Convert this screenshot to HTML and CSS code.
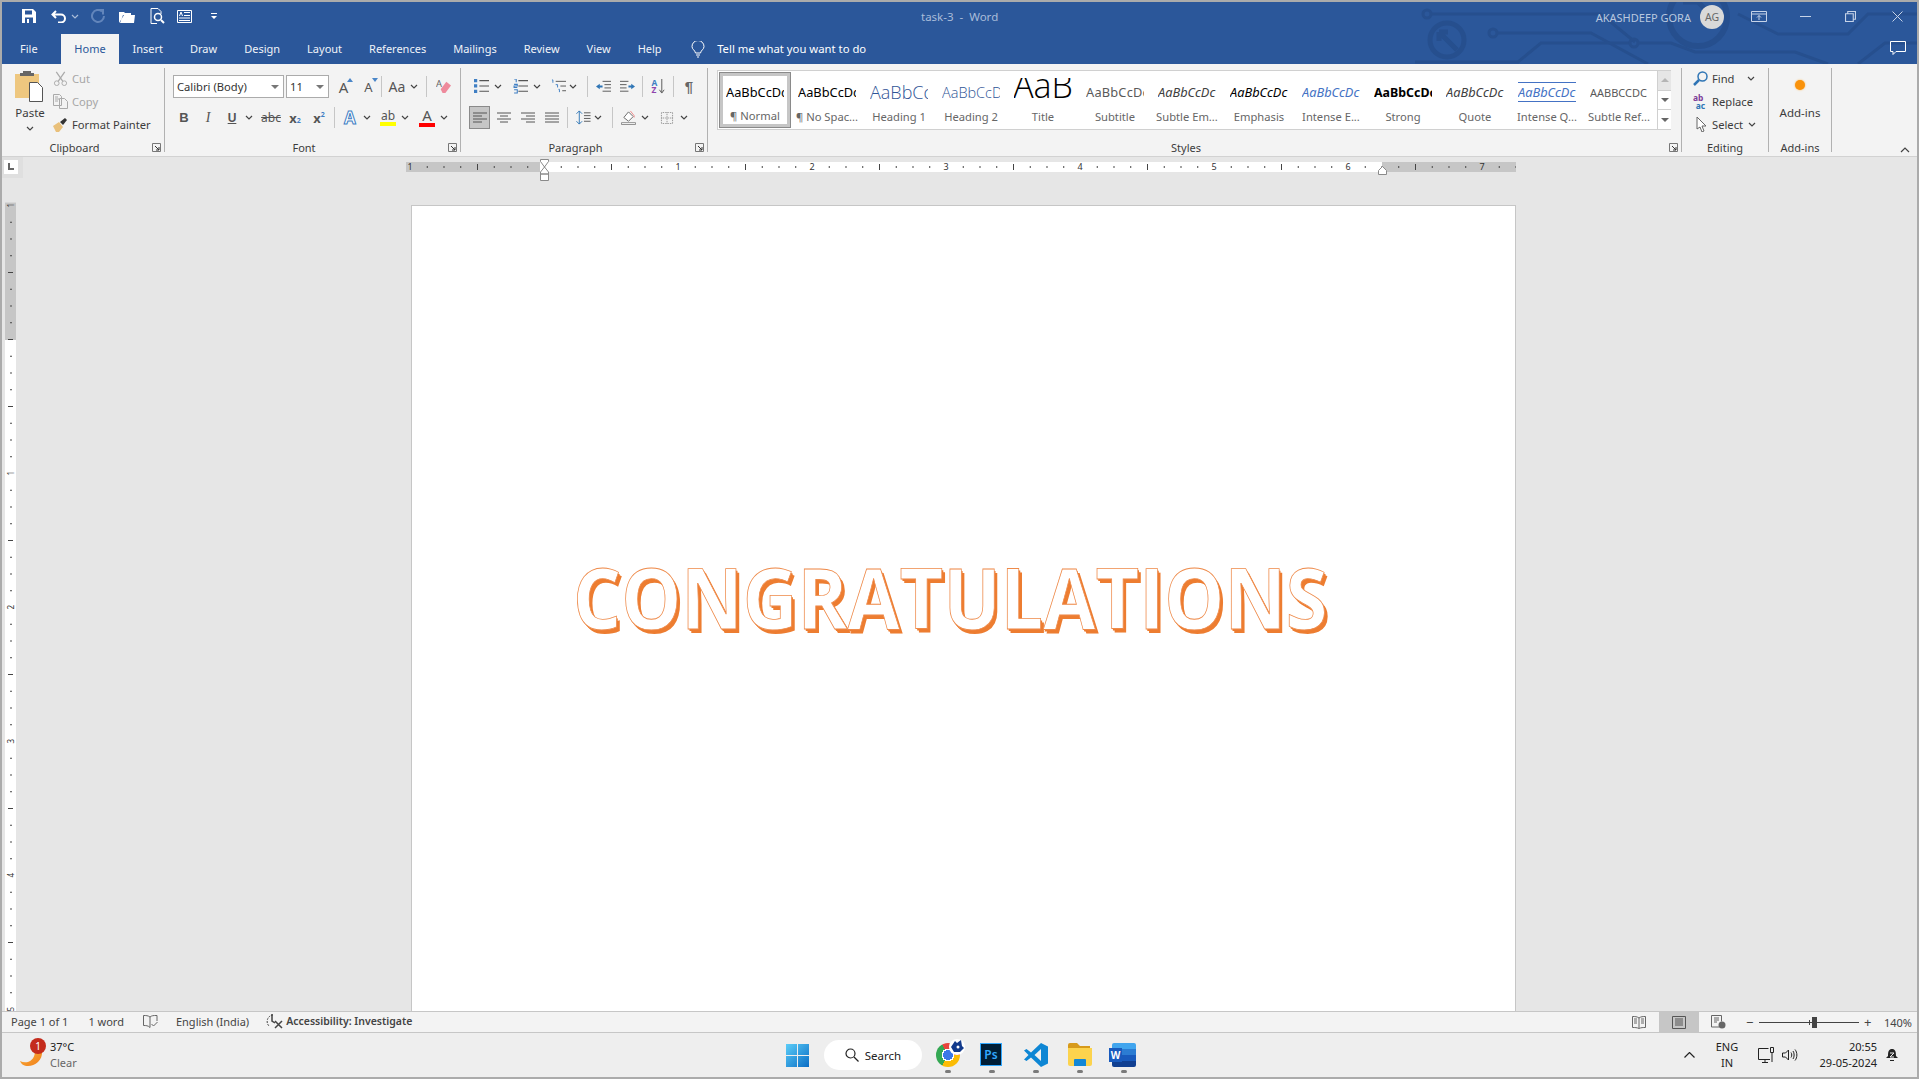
FILE: index.html
```html
<!DOCTYPE html>
<html lang="en">

<head>
    <meta charset="UTF-8">
    <title>task-3 - Word</title>
    <link rel="stylesheet" href="styles.css">
</head>

<body>
    <svg class="defs">
        <symbol id="chev" viewBox="0 0 8 5"><path d="M1 1l3 3 3-3" fill="none" stroke="#444" stroke-width="1.2"/></symbol>
        <symbol id="launch" viewBox="0 0 9 9"><path d="M.5 8.5v-8h8v8z" fill="none" stroke="#777"/><path d="M3 3l4 4M7 4v3H4" fill="none" stroke="#333"/></symbol>
        <symbol id="lines" viewBox="0 0 14 12"><path d="M0 1h14M0 4h14M0 7h14M0 10h14" stroke="#555" stroke-width="1" fill="none"/></symbol>
    </svg>

    <div class="window">
        <div class="head">
            <svg class="circuit" viewBox="0 0 519 62" width="519" height="62">
                <g fill="none" stroke="#264f8e" stroke-width="3">
                    <circle cx="29" cy="12" r="4"/><path d="M33 12h170l34 28"/>
                    <circle cx="95" cy="31" r="4"/><path d="M99 31h94l57 31"/>
                    <path d="M17 60h103l23-19h89"/><circle cx="236" cy="41" r="4"/><path d="M240 41h33l24 9h100l33 12"/>
                    <circle cx="49" cy="38" r="17" stroke-width="5"/><path d="M41 30h9M41 30v9M41 30l18 18" stroke-width="5"/>
                    <circle cx="300" cy="15" r="29" stroke-width="6"/><path d="M285 0h15M300 0l20 20" stroke-width="5"/>
                    <path d="M460 62l27-21h32M340 12l40 20h70l20-20h49"/>
                </g>
            </svg>
            <!-- title bar -->
            <header class="titlebar">
                <div class="qat">
                    <svg class="q-save" viewBox="0 0 14 14"><path d="M0 0h11l3 3v11H0z" fill="#fff"/><path d="M3 1.500h7v4H3zM3 8.500h8V14H3z" fill="#2b579a"/><path d="M5 10h2v4H5z" fill="#fff"/></svg>
                    <svg class="q-undo" viewBox="0 0 16 14"><path d="M5 2L1.500 5.500 5 9M2 5.500h8a4 4 0 0 1 0 8H7" fill="none" stroke="#fff" stroke-width="2"/></svg>
                    <svg class="q-chev" viewBox="0 0 8 5"><path d="M1 1l3 3 3-3" fill="none" stroke="#a9bcd9" stroke-width="1.200"/></svg>
                    <svg class="q-redo" viewBox="0 0 14 14"><path d="M11 2.500A6 6 0 1 0 13 7M7 .5h5v5" fill="none" stroke="#6285bb" stroke-width="2"/></svg>
                    <svg class="q-open" viewBox="0 0 16 13"><path d="M0 13V2h5l1 1h6v2H4L1 13h14l1-8H5" fill="#fff"/></svg>
                    <svg class="q-prev" viewBox="0 0 15 16"><path d="M1 .5h7l3 3V6M1 .5V15.500h6" fill="none" stroke="#fff"/><circle cx="8" cy="9" r="3.500" fill="none" stroke="#fff" stroke-width="1.500"/><path d="M11 12l3 3" stroke="#fff" stroke-width="2"/></svg>
                    <svg class="q-form" viewBox="0 0 15 13"><path d="M.5.5h14v12H.5z" fill="none" stroke="#fff"/><path d="M2.500 6l1.500-4 1.500 4M7 2.500h6M7 5.500h6M2 8h11M2 10.500h11" fill="none" stroke="#fff"/></svg>
                    <svg class="q-more" viewBox="0 0 7 7"><path d="M0 0h6v1H0zM0 3h6L3 6z" fill="#fff"/></svg>
                </div>
                <div class="doc-title">task-3&nbsp; -&nbsp; Word</div>
                <div class="account">
                    <span class="user">AKASHDEEP GORA</span>
                    <span class="avatar">AG</span>
                </div>
                <div class="winbtns">
                    <svg class="w-display" viewBox="0 0 16 11"><path d="M.5.5h15v10H.5zM.5 3h15M8 9V4.500M6 6.500l2-2 2 2" fill="none" stroke="#c6d3e8"/></svg>
                    <svg class="w-min" viewBox="0 0 11 1"><path d="M0 .5h11" stroke="#c6d3e8"/></svg>
                    <svg class="w-max" viewBox="0 0 10 10"><path d="M.5 2.500h7v7h-7zM2.500 2.500V.5h7v7h-2" fill="none" stroke="#c6d3e8"/></svg>
                    <svg class="w-close" viewBox="0 0 11 11"><path d="M.5.5l10 10M10.500.5l-10 10" stroke="#c6d3e8"/></svg>
                </div>
            </header>

            <!-- tabs -->
            <nav class="tabs">
                <span class="tab file">File</span>
                <span class="tab active">Home</span>
                <span class="tab">Insert</span>
                <span class="tab">Draw</span>
                <span class="tab">Design</span>
                <span class="tab">Layout</span>
                <span class="tab">References</span>
                <span class="tab">Mailings</span>
                <span class="tab">Review</span>
                <span class="tab">View</span>
                <span class="tab">Help</span>
                <svg class="bulb" viewBox="0 0 14 17"><path d="M4.500 12C4 9 1 8.500 1 5.500a6 6 0 0 1 12 0c0 3-3 3.500-3.500 6.500zM5 14h4M6 16h2" fill="none" stroke="#fff"/></svg>
                <span class="tell">Tell me what you want to do</span>
                <svg class="comment" viewBox="0 0 16 14"><path d="M.5.5h15v10H6l-3 3v-3H.5z" fill="none" stroke="#fff"/></svg>
            </nav>
        </div>

        <!-- ribbon -->
        <section class="ribbon">
            <div class="group g-clip">
                <div class="clip">
                    <div class="paste">
                        <svg class="paste-ico" viewBox="0 0 28 32"><path d="M0 4h24v24H0z" fill="#eec77f"/><path d="M8 1h8v2h3v3H5V3h3z" fill="#666"/><path d="M14.500 12.500h8l5 5v14h-13z" fill="#fff" stroke="#555"/></svg>
                        <span class="paste-txt">Paste</span>
                        <svg class="chev"><use href="#chev"/></svg>
                    </div>
                    <div class="clip-list">
                        <div class="clip-row off">
                            <svg class="ico16" viewBox="0 0 15 16"><path d="M3 1l7 10M12 1L5 11" stroke="#aaa" fill="none" stroke-width="1.300"/><circle cx="3.500" cy="13" r="2.500" fill="none" stroke="#aaa"/><circle cx="11.500" cy="13" r="2.500" fill="none" stroke="#aaa"/></svg>
                            Cut
                        </div>
                        <div class="clip-row off">
                            <svg class="ico16" viewBox="0 0 15 15"><path d="M.5.5h6l2 2v9H.5zM6.500 4.500h5l3 3v7h-8zM2 3h3M2 5h4M2 7h3" fill="#f3f3f3" stroke="#aaa"/></svg>
                            Copy
                        </div>
                        <div class="clip-row">
                            <svg class="ico16" viewBox="0 0 15 15"><path d="M0 9l6-4 4 5-4 5H3z" fill="#e9c07a"/><path d="M7 5l5-4 2 2-4 5z" fill="#333"/></svg>
                            Format Painter
                        </div>
                    </div>
                </div>
                <div class="glabel">Clipboard</div>
                <svg class="launch"><use href="#launch"/></svg>
            </div>

            <div class="group g-font">
                <div class="row">
                    <div class="combo c-name"><span>Calibri (Body)</span><i class="caret"></i></div>
                    <div class="combo c-size"><span>11</span><i class="caret"></i></div>
                    <span class="b big ml2">A<svg class="mini" viewBox="0 0 6 4"><path d="M0 4l3-4 3 4z" fill="#4a86c8"/></svg></span>
                    <span class="b mid">A<svg class="mini" viewBox="0 0 6 4"><path d="M0 0l3 4 3-4z" fill="#4a86c8"/></svg></span>
                    <i class="sep"></i>
                    <span class="b wide ml3">Aa</span>
                    <svg class="chev"><use href="#chev"/></svg>
                    <i class="sep ml7"></i>
                    <span class="b ml4">
                        <svg class="ico16" viewBox="0 0 16 16"><text x="0" y="9" class="erase-a">A</text><path d="M5 11l6-8 5 4-6 8H7z" fill="#ee8a9c"/></svg>
                    </span>
                </div>
                <div class="row r2 r2-font">
                    <span class="b bold">B</span>
                    <span class="b ital">I</span>
                    <span class="b under">U</span>
                    <svg class="chev"><use href="#chev"/></svg>
                    <span class="b strike ml5">abc</span>
                    <span class="b sub">x<small>2</small></span>
                    <span class="b sup">x<small>2</small></span>
                    <i class="sep ml3"></i>
                    <span class="b fx ml3">A</span>
                    <svg class="chev"><use href="#chev"/></svg>
                    <span class="b mark ml4">ab<u class="bar yellow"></u></span>
                    <svg class="chev"><use href="#chev"/></svg>
                    <span class="b colr ml5">A<u class="bar red"></u></span>
                    <svg class="chev"><use href="#chev"/></svg>
                </div>
                <div class="glabel">Font</div>
                <svg class="launch"><use href="#launch"/></svg>
            </div>

            <div class="group g-para">
                <div class="row">
                    <span class="b">
                        <svg class="ico16" viewBox="0 0 14 14"><path d="M0 0h3v3H0zM0 5h3v3H0zM0 10h3v3H0z" fill="#3f7fc4"/><path d="M5 1.500h9M5 6.500h9M5 11.500h9" stroke="#555"/></svg>
                    </span>
                    <svg class="chev"><use href="#chev"/></svg>
                    <span class="b ml5">
                        <svg class="ico16" viewBox="0 0 14 14"><path d="M1 0h2v3M1 5h3v1.500H1V8h3M1 10h3v3H1" fill="none" stroke="#3f7fc4"/><path d="M5 1.500h9M5 6.500h9M5 11.500h9" stroke="#555"/></svg>
                    </span>
                    <svg class="chev"><use href="#chev"/></svg>
                    <span class="b n20 ml6">
                        <svg class="ico16" viewBox="0 0 16 14"><path d="M1 0h1v3M5 5h2v3M8 10h1v3" fill="none" stroke="#3f7fc4"/><path d="M5 1.500h11M10 6.500h6M12 11.500h4" stroke="#555"/></svg>
                    </span>
                    <svg class="chev"><use href="#chev"/></svg>
                    <i class="sep ml9"></i>
                    <span class="b n20 ml5">
                        <svg class="ico16" viewBox="0 0 16 12"><path d="M7 .5h9M9 4h7M9 7.500h7M7 11h9" stroke="#555"/><path d="M0 6l4-3v2h3v2H4v2z" fill="#2f75b5"/></svg>
                    </span>
                    <span class="b n24 ml2">
                        <svg class="ico16" viewBox="0 0 16 12"><path d="M0 .5h9M0 4h7M0 7.500h7M0 11h9" stroke="#555"/><path d="M16 6l-4-3v2H9v2h3v2z" fill="#2f75b5"/></svg>
                    </span>
                    <i class="sep ml3"></i>
                    <span class="b ml3">
                        <svg class="ico16" viewBox="0 0 15 16"><text x="0" y="7" class="az az-a">A</text><text x="0" y="15" class="az az-z">Z</text><path d="M11 0v14M8.500 11.500L11 15l2.500-3.500" fill="none" stroke="#555"/></svg>
                    </span>
                    <i class="sep ml3"></i>
                    <span class="b pilcrow ml3">¶</span>
                </div>
                <div class="row r2">
                    <span class="b align on"><svg class="ico14" viewBox="0 0 14 12"><path d="M0 1h14M0 4h9M0 7h14M0 10h9" stroke="#555" fill="none"/></svg></span>
                    <span class="b n24 ml2"><svg class="ico14" viewBox="0 0 14 12"><path d="M0 1h14M3 4h8M0 7h14M3 10h8" stroke="#555" fill="none"/></svg></span>
                    <span class="b n24"><svg class="ico14" viewBox="0 0 14 12"><path d="M0 1h14M5 4h9M0 7h14M5 10h9" stroke="#555" fill="none"/></svg></span>
                    <span class="b n24"><svg class="ico14"><use href="#lines"/></svg></span>
                    <i class="sep ml3"></i>
                    <span class="b n20 ml5">
                        <svg class="ico16" viewBox="0 0 15 16"><path d="M3 1v14M0 4l3-3 3 3M0 12l3 3 3-3" fill="none" stroke="#2f75b5"/><path d="M8 3h7M8 6h7M8 9h7M8 12h7" stroke="#555"/></svg>
                    </span>
                    <svg class="chev"><use href="#chev"/></svg>
                    <i class="sep ml9"></i>
                    <span class="b n24 ml3">
                        <svg class="ico16" viewBox="0 0 16 16"><path d="M3 8l5-6 5 5-5 5z" fill="#fff" stroke="#666"/><path d="M10 1l4 5v2" stroke="#e88" fill="none"/><path d="M.5 13.500h15v2H.5z" fill="#fff" stroke="#888"/></svg>
                    </span>
                    <svg class="chev"><use href="#chev"/></svg>
                    <span class="b n24 ml5">
                        <svg class="ico14" viewBox="0 0 14 14"><path d="M.5.5h13v13H.5zM7 .5v13M.5 7h13" fill="none" stroke="#777" stroke-dasharray="1 1"/></svg>
                    </span>
                    <svg class="chev"><use href="#chev"/></svg>
                </div>
                <div class="glabel">Paragraph</div>
                <svg class="launch"><use href="#launch"/></svg>
            </div>

            <div class="group g-styles">
                <div class="gallery">
                    <div class="style sel"><div class="sample s-normal"><span>AaBbCcDc</span></div><div class="sname">¶ Normal</div></div>
                    <div class="style"><div class="sample s-normal"><span>AaBbCcDc</span></div><div class="sname">¶ No Spac...</div></div>
                    <div class="style"><div class="sample s-h1"><span>AaBbCc</span></div><div class="sname">Heading 1</div></div>
                    <div class="style"><div class="sample s-h2"><span>AaBbCcD</span></div><div class="sname">Heading 2</div></div>
                    <div class="style"><div class="sample s-title"><span>AaB</span></div><div class="sname">Title</div></div>
                    <div class="style"><div class="sample s-sub"><span>AaBbCcDc</span></div><div class="sname">Subtitle</div></div>
                    <div class="style"><div class="sample s-subem"><span>AaBbCcDc</span></div><div class="sname">Subtle Em...</div></div>
                    <div class="style"><div class="sample s-em"><span>AaBbCcDc</span></div><div class="sname">Emphasis</div></div>
                    <div class="style"><div class="sample s-intem"><span>AaBbCcDc</span></div><div class="sname">Intense E...</div></div>
                    <div class="style"><div class="sample s-strong"><span>AaBbCcDc</span></div><div class="sname">Strong</div></div>
                    <div class="style"><div class="sample s-quote"><span>AaBbCcDc</span></div><div class="sname">Quote</div></div>
                    <div class="style"><div class="sample s-intq"><span>AaBbCcDc</span></div><div class="sname">Intense Q...</div></div>
                    <div class="style"><div class="sample s-ref"><span>AaBbCcDc</span></div><div class="sname">Subtle Ref...</div></div>
                    <div class="gscroll">
                        <span class="gs up"><i class="tri t-up"></i></span>
                        <span class="gs"><i class="tri"></i></span>
                        <span class="gs more"><i class="tri"></i></span>
                    </div>
                </div>
                <div class="glabel">Styles</div>
                <svg class="launch"><use href="#launch"/></svg>
            </div>

            <div class="group g-edit">
                <div class="edit-row">
                    <svg class="ico16" viewBox="0 0 15 15"><circle cx="9.500" cy="5.500" r="4.500" fill="none" stroke="#2f75b5" stroke-width="1.500"/><path d="M6 9l-5 5" stroke="#2f75b5" stroke-width="2.500"/></svg>
                    <span>Find</span>
                    <svg class="chev ml8"><use href="#chev"/></svg>
                </div>
                <div class="edit-row">
                    <svg class="ico16" viewBox="0 0 16 15"><text x="0" y="7" class="rep r-ab">ab</text><text x="3" y="15" class="rep r-ac">ac</text></svg>
                    <span>Replace</span>
                </div>
                <div class="edit-row">
                    <svg class="ico16" viewBox="0 0 15 15"><path d="M4 0v12l3-2 2 5 2-1-2-5h4z" fill="#fff" stroke="#666"/></svg>
                    <span>Select</span>
                    <svg class="chev"><use href="#chev"/></svg>
                </div>
                <div class="glabel">Editing</div>
            </div>

            <div class="group g-addins">
                <div class="dot"></div>
                <div class="addins-txt">Add-ins</div>
                <div class="glabel">Add-ins</div>
            </div>

            <svg class="collapse" viewBox="0 0 10 6"><path d="M1 5l4-4 4 4" fill="none" stroke="#444" stroke-width="1.200"/></svg>
        </section>

        <!-- document area -->
        <main class="docarea">
            <div class="leftcol">
                <div class="tabstop"><span class="tabstop-box"><i></i></span></div>
                <div class="vruler">
                    <div class="vnums">
                        <span><b class="g">1</b></span><span><b class="h"></b></span><span><b>1</b></span><span><b>2</b></span><span><b>3</b></span><span><b>4</b></span><span><b>5</b></span>
                    </div>
                </div>
            </div>
            <div class="docmain">
                <div class="hruler">
                    <div class="hnums">
                        <span><b class="g">1</b></span><span><b class="h"></b></span><span><b>1</b></span><span><b>2</b></span><span><b>3</b></span><span><b>4</b></span><span><b>5</b></span><span><b>6</b></span><span><b class="g">7</b></span>
                    </div>
                    <svg class="indent-l" viewBox="0 0 9 22"><path d="M.5.5h8v2L4.500 8 .5 2.500zM4.500 8l4 5v2h-8v-2zM.5 15h8v6.500h-8z" fill="#fff" stroke="#8a8a8a"/></svg>
                    <svg class="indent-r" viewBox="0 0 9 9"><path d="M4.500.5l4 4v4h-8v-4z" fill="#fff" stroke="#8a8a8a"/></svg>
                </div>
                <div class="page">
                    <div class="wordart">CONGRATULATIONS</div>
                </div>
            </div>
        </main>

        <!-- status bar -->
        <footer class="status">
            <span class="st-page">Page 1 of 1</span>
            <span class="st-words">1 word</span>
            <svg class="st-proof" viewBox="0 0 15 13"><path d="M7 2C5 .5 3 .5 .5.500v10C3 10.500 5 10.500 7 12.500V2zM7 2c2-1.500 3-1.500 7-1.500V6" fill="none" stroke="#666"/><path d="M8.500 9l2 2 4-4" fill="none" stroke="#666"/></svg>
            <span class="st-lang">English (India)</span>
            <svg class="st-acc" viewBox="0 0 17 15"><path d="M7 1a6.500 6.500 0 0 0-4 11" fill="none" stroke="#444" stroke-dasharray="2 1"/><path d="M6 0v7l3 2M9 7l7 7M16 7l-7 7" fill="none" stroke="#444" stroke-width="1.500"/></svg>
            <b class="st-inv">Accessibility: Investigate</b>
            <div class="st-right">
                <svg class="v-read" viewBox="0 0 14 13"><path d="M7 2C5 .5 3 .5.500.5v11c2.500 0 4.500 0 6.500 1 2-1 4-1 6.500-1V.5C11 .5 9 .5 7 2zM7 2v10M2 3h3M2 5h3M2 7h3M9 3h3M9 5h3M9 7h3" fill="none" stroke="#666"/></svg>
                <span class="v-print"><svg viewBox="0 0 14 13"><path d="M.5.500h13v12H.5zM3 3h8M3 5h8M3 7h8M3 9h8" fill="none" stroke="#555"/></svg></span>
                <svg class="v-web" viewBox="0 0 15 14"><path d="M8 12H.5V.5h10v6M3 3h5M3 5h5M3 7h3" fill="none" stroke="#666"/><circle cx="11" cy="10" r="3.500" fill="#666"/></svg>
                <span class="z-btn">−</span>
                <div class="slider"><i class="notch"></i><i class="thumb"></i></div>
                <span class="z-btn">+</span>
                <span class="z-pct">140%</span>
            </div>
        </footer>

        <!-- windows taskbar -->
        <footer class="taskbar">
            <div class="weather">
                <svg class="w-ico" viewBox="0 0 23 23"><defs><linearGradient id="moon" x1="0" y1="0" x2="1" y2="1"><stop offset="0" stop-color="#fbb03b"/><stop offset="1" stop-color="#ef7e1a"/></linearGradient></defs><path d="M22 7c1 9-7 15-14 15-4 0-7-2-8-5 6 3 14 1 15-9z" fill="url(#moon)"/></svg>
                <span class="w-badge">1</span>
                <div class="w-text"><span>37°C</span><span class="w-clear">Clear</span></div>
            </div>
            <div class="tb-center">
                <svg class="start" viewBox="0 0 23 23"><defs><linearGradient id="win" x1="0" y1="0" x2="1" y2="1"><stop offset="0" stop-color="#5bcdf8"/><stop offset="1" stop-color="#0a6cc4"/></linearGradient></defs><path d="M0 0h11v11H0zM12 0h11v11H12zM0 12h11v11H0zM12 12h11v11H12z" fill="url(#win)"/></svg>
                <div class="search">
                    <svg viewBox="0 0 14 14"><circle cx="5.500" cy="5.500" r="4.500" fill="none" stroke="#222" stroke-width="1.200"/><path d="M9 9l4.500 4.500" stroke="#222" stroke-width="1.200"/></svg>
                    Search
                </div>
                <div class="app a-chrome">
                    <span class="chrome"></span>
                    <svg class="sonic" viewBox="0 0 16 16"><circle cx="8" cy="8" r="8" fill="#fff"/><path d="M2 8l4-6 2 2 4-3 1 6 2 2-4 4H5z" fill="#123a8c"/><circle cx="9" cy="8" r="1.500" fill="#fff"/></svg>
                    <i class="run"></i>
                </div>
                <div class="app a-ps"><span class="ps">Ps</span><i class="run"></i></div>
                <div class="app a-vs">
                    <svg viewBox="0 0 24 24"><path d="M17 0l7 3.500v17L17 24 7 14.500 2.500 18 0 16.500 4.500 12 0 7.500 2.500 6 7 9.500z" fill="#0e86d4"/><path d="M17 6l-6.500 6 6.500 6z" fill="#f1f1f1"/></svg>
                    <i class="run"></i>
                </div>
                <div class="app a-ex">
                    <svg viewBox="0 0 24 23"><path d="M0 2a2 2 0 0 1 2-2h7l3 3h10v3H0z" fill="#d79a1b"/><path d="M0 5h24v16a2 2 0 0 1-2 2H2a2 2 0 0 1-2-2z" fill="#fcd34d"/><path d="M7 16h10a1 1 0 0 1 1 1v6H6v-6a1 1 0 0 1 1-1z" fill="#1287d6"/></svg>
                    <i class="run"></i>
                </div>
                <div class="app a-word">
                    <span class="wd"><span class="wd-w">W</span></span>
                    <i class="run"></i>
                </div>
            </div>
            <div class="tray">
                <svg class="tr-up" viewBox="0 0 11 6"><path d="M.5 5.500l5-5 5 5" fill="none" stroke="#222" stroke-width="1.200"/></svg>
                <div class="tr-lang"><span>ENG</span><span>IN</span></div>
                <svg class="tr-net" viewBox="0 0 17 16"><path d="M12 12.500H.5V1.500h10M4 15.500h6M7 12.500v3" fill="none" stroke="#222"/><path d="M12.500.5h3v5h-3zM14 5.500V15" fill="none" stroke="#222"/></svg>
                <svg class="tr-vol" viewBox="0 0 16 14"><path d="M.5 5h3l3-3v10l-3-3h-3zM9 4.500c1 1.500 1 3.500 0 5M11 3c1.500 2 1.500 6 0 8M13 1.500c2.500 3 2.500 8 0 11" fill="none" stroke="#222"/></svg>
                <div class="tr-clock"><span>20:55</span><span>29-05-2024</span></div>
                <svg class="tr-bell" viewBox="0 0 14 14"><path d="M7 1c-3 0-4 2-4 7l-2 2h12l-2-2c0-5-1-7-4-7zM5 12h4v1H5z" fill="#222"/><path d="M5 5h4L5 9h4" fill="none" stroke="#eee"/></svg>
            </div>
        </footer>
    </div>
</body>

</html>
```

FILE: styles.css
```css
* {
    box-sizing: border-box;
}

html,
body {
    margin: 0;
    height: 100%;
    overflow: hidden;
}

body {
    font-family: "Noto Sans", "Open Sans", sans-serif;
    font-size: 11.5px;
    color: #3c3c3c;
}

.defs {
    display: none;
}

i {
    font-style: normal;
}

.window {
    width: 1919px;
    height: 1079px;
    display: flex;
    flex-direction: column;
    border: 2px solid #ababab;
    overflow: hidden;
}

.head {
    position: relative;
    flex: none;
    background: #2b579a;
}

.circuit {
    position: absolute;
    right: 0;
    top: 0;
}

/* title bar */
.titlebar {
    position: relative;
    height: 32px;
    padding-bottom: 4px;
    display: flex;
    align-items: center;
}

.qat {
    display: flex;
    align-items: center;
    padding-left: 20px;
}

.qat svg {
    display: block;
}

.q-save { width: 14px; height: 14px; }
.q-undo { width: 16px; height: 14px; margin-left: 15px; }
.q-chev { width: 8px; height: 5px; margin-left: 4px; }
.q-redo { width: 14px; height: 14px; margin-left: 12px; }
.q-open { width: 16px; height: 13px; margin-left: 14px; }
.q-prev { width: 15px; height: 16px; margin-left: 15px; }
.q-form { width: 15px; height: 13px; margin-left: 12px; }
.q-more { width: 7px; height: 7px; margin-left: 19px; }

.doc-title {
    position: absolute;
    left: 919px;
    top: 7px;
    font-size: 11.5px;
    color: #a9bcd9;
}

.account {
    margin-left: auto;
    margin-top: 2px;
    display: flex;
    align-items: center;
    color: #b9c8df;
    font-size: 11px;
}

.avatar {
    width: 24px;
    height: 24px;
    margin-left: 9px;
    border-radius: 50%;
    background: #d9d9d9;
    color: #666;
    font-size: 10.5px;
    display: flex;
    align-items: center;
    justify-content: center;
}

.winbtns {
    display: flex;
    align-items: center;
    margin-left: 27px;
    padding-right: 14px;
}

.winbtns svg {
    display: block;
}

.w-display { width: 16px; height: 11px; }
.w-min { width: 13px; height: 1px; margin-left: 32px; }
.w-max { width: 11px; height: 11px; margin-left: 33px; }
.w-close { width: 11px; height: 11px; margin-left: 36px; }

/* tabs */
.tabs {
    position: relative;
    height: 30px;
    display: flex;
    align-items: center;
    color: #fff;
    padding-left: 18px;
}

.tab {
    height: 100%;
    display: flex;
    align-items: center;
    padding: 0 13.500px 2px;
    font-size: 11px;
    color: #f0f3f8;
}

.tab.file {
    padding: 0 23px 2px 0;
    width: 41px;
}

.tab.active {
    padding: 0 0 2px;
    background: #f3f3f3;
    color: #2b579a;
    width: 58px;
    justify-content: center;
}

.bulb {
    width: 14px;
    height: 17px;
    margin-left: 16px;
}

.tell {
    margin-left: 12px;
    padding-bottom: 2px;
    font-size: 11.300px;
}

.comment {
    position: absolute;
    right: 11px;
    top: 7px;
    width: 16px;
    height: 14px;
}

/* ribbon */
.ribbon {
    position: relative;
    height: 93px;
    flex: none;
    background: #f3f3f3;
    border-bottom: 1px solid #d2d2d2;
    display: flex;
    padding: 4px 0;
    font-size: 11.200px;
}

.group {
    position: relative;
    height: 84px;
    flex: none;
    border-right: 1px solid #b1b1b1;
    padding-top: 7px;
}

.g-clip { width: 163px; }
.g-font { width: 296px; padding-left: 8px; }
.g-para { width: 247px; padding-left: 8px; }
.g-styles { width: 974px; padding-left: 9px; padding-top: 2px; }
.g-edit { width: 87px; padding-top: 0; padding-left: 11px; }
.g-addins { width: 63px; padding-top: 0; }

.glabel {
    position: absolute;
    left: 0;
    right: 0;
    bottom: -4px;
    padding-right: 17px;
    height: 16px;
    line-height: 16px;
    text-align: center;
    font-size: 11px;
    color: #3c3c3c;
}

.g-edit .glabel,
.g-addins .glabel {
    padding-right: 0;
}

.launch {
    position: absolute;
    right: 3px;
    bottom: 0;
    width: 9px;
    height: 9px;
}

.chev {
    width: 8px;
    height: 5px;
    flex: none;
    margin: 0 1px;
}

.ico16 {
    width: 15px;
    height: 15px;
    flex: none;
    display: block;
}

.ico14 {
    width: 14px;
    height: 12px;
    display: block;
}

/* clipboard */
.clip {
    display: flex;
    margin-top: -8px;
}

.paste {
    width: 34px;
    margin-left: 11px;
    padding-top: 3px;
    display: flex;
    flex-direction: column;
    align-items: center;
    font-size: 11.500px;
}

.paste-ico {
    width: 28px;
    height: 32px;
    margin-left: -2px;
}

.paste-txt {
    margin-top: 2px;
    line-height: 18px;
}

.paste .chev {
    margin-top: 4px;
}

.clip-list {
    margin-left: 6px;
    display: flex;
    flex-direction: column;
}

.clip-row {
    height: 23px;
    display: flex;
    align-items: center;
    gap: 4px;
    white-space: nowrap;
}

.clip-row.off {
    color: #a6a6a6;
}

/* font + paragraph rows */
.row {
    display: flex;
    align-items: center;
    height: 23px;
}

.row.r2 {
    margin-top: 8px;
}

.r2-font {
    margin-left: -1px;
}

.combo {
    height: 23px;
    border: 1px solid #ababab;
    background: #fff;
    display: flex;
    align-items: center;
    padding-left: 3px;
    position: relative;
    font-size: 11.200px;
    color: #333;
}

.c-name { width: 111px; margin-right: 2px; }
.c-size { width: 43px; }

.caret {
    position: absolute;
    right: 4px;
    top: 9px;
    border: 4px solid transparent;
    border-top: 4px solid #777;
    border-bottom: 0;
}

.b {
    width: 24px;
    height: 23px;
    flex: none;
    display: flex;
    align-items: center;
    justify-content: center;
    position: relative;
    color: #555;
    font-size: 13px;
}

.b.n20 { width: 20px; }
.b.n24 { width: 24px; }
.b.wide { width: 24px; font-size: 14px; }
.b.big { font-size: 15px; width: 25px; }
.b.mid { font-size: 13px; width: 25px; }

.mini {
    position: absolute;
    right: 3px;
    top: 3px;
    width: 6px;
    height: 4px;
}

.sep {
    width: 1px;
    height: 21px;
    flex: none;
    background: #c6c6c6;
}

.ml1 { margin-left: 1px; }
.ml2 { margin-left: 2px; }
.ml3 { margin-left: 3px; }
.ml4 { margin-left: 4px; }
.ml5 { margin-left: 5px; }
.ml6 { margin-left: 6px; }
.ml7 { margin-left: 7px; }
.ml8 { margin-left: 8px; }
.ml9 { margin-left: 9px; }

.bold { font-weight: 700; font-family: "Liberation Sans", sans-serif; }
.ital { font-style: italic; font-family: "Liberation Serif", serif; font-size: 14px; }
.under { font-weight: 700; text-decoration: underline; font-family: "Liberation Sans", sans-serif; font-size: 12px; }
.strike { text-decoration: line-through; font-size: 12px; }
.sub, .sup { font-weight: 700; font-size: 13px; }
.sub small { color: #3f7fc4; font-size: 7px; align-self: flex-end; margin-bottom: 4px; }
.sup small { color: #3f7fc4; font-size: 7px; align-self: flex-start; margin-top: 4px; }

.fx {
    font-size: 17px;
    font-weight: 700;
    color: #fff;
    -webkit-text-stroke: 1px #3f7fc4;
}

.mark,
.colr {
    flex-direction: column;
    font-size: 12px;
    line-height: 13px;
}

.colr {
    font-size: 15px;
    line-height: 15px;
}

.bar {
    display: block;
    width: 16px;
    height: 4px;
}

.yellow { background: #ffff00; }
.red { background: #ff0000; }

.erase-a { font-size: 10px; fill: #666; }
.az { font-size: 9px; font-weight: 700; }
.az-a { fill: #3f7fc4; }
.az-z { fill: #8e44ad; }
.rep { font-size: 9px; font-weight: 700; }
.r-ab { fill: #7d3c98; }
.r-ac { fill: #2f75b5; }

.pilcrow {
    font-size: 15px;
    font-weight: 700;
    color: #666;
    font-family: "Liberation Sans", sans-serif;
}

.align.on {
    width: 21px;
    background: #c6c6c6;
    border: 1px solid #8a8a8a;
}

/* styles gallery */
.gallery {
    display: flex;
    width: 954px;
    height: 60px;
    padding: 1px 0 1px 1px;
    border: 1px solid #d0d0d0;
    background: #fff;
}

.style {
    width: 72px;
    height: 56px;
    flex: none;
    display: flex;
    flex-direction: column;
    align-items: center;
}

.style.sel {
    outline: 1px solid #8a8a8a;
    outline-offset: -1px;
    border: 4px solid #c6c6c6;
    position: relative;
}

.sample {
    width: 58px;
    height: 28px;
    margin-top: 6px;
    overflow: hidden;
    display: flex;
    align-items: center;
    white-space: nowrap;
    flex: none;
    font-size: 12.800px;
    color: #000;
}

.sample span {
    flex: none;
}

.style.sel .sample { margin-top: 2px; }
.style.sel .sname { height: 18px; line-height: 20px; }

.sname {
    height: 22px;
    line-height: 22px;
    font-size: 11.200px;
    color: #666;
    white-space: nowrap;
}

.s-h1 { font-size: 18px; color: #2f5496; font-family: "Open Sans", sans-serif; font-weight: 300; }
.s-h2 { font-size: 14.500px; color: #2f5496; font-family: "Open Sans", sans-serif; font-weight: 300; }
.s-title { font-size: 34px; font-weight: 300; font-family: "Open Sans", sans-serif; justify-content: center; }
.s-title span { margin-top: -14px; }
.s-sub { color: #5a5a5a; letter-spacing: .2px; }
.s-subem { color: #404040; font-style: italic; }
.s-em { font-style: italic; }
.s-intem { color: #4472c4; font-style: italic; }
.s-strong { font-weight: 700; font-size: 12.400px; }
.s-quote { color: #404040; font-style: italic; }
.s-intq { color: #4472c4; font-style: italic; border-top: 1px solid #4472c4; border-bottom: 1px solid #4472c4; height: 20px; margin-top: 10px; margin-bottom: 4px; }
.s-ref { color: #5a5a5a; text-transform: uppercase; font-size: 11px; }

.gscroll {
    width: 14px;
    height: 58px;
    margin: -1px 0 0 2px;
    display: flex;
    flex-direction: column;
    flex: none;
}

.gs {
    flex: 1;
    display: flex;
    align-items: center;
    justify-content: center;
    border-left: 1px solid #d0d0d0;
    border-bottom: 1px solid #d0d0d0;
    background: #fff;
}

.gs.up {
    background: #e6e6e6;
}

.gs.more {
    border-bottom: 0;
}

.tri {
    border: 4px solid transparent;
    border-top: 4px solid #666;
    border-bottom: 0;
}

.t-up {
    border-top: 0;
    border-bottom: 4px solid #b5b5b5;
}

/* editing */
.edit-row {
    height: 23px;
    display: flex;
    align-items: center;
    gap: 4px;
    white-space: nowrap;
}

.g-edit .edit-row:first-child {
    margin-top: -1px;
}

.g-addins {
    display: flex;
    flex-direction: column;
    align-items: center;
}

.dot {
    width: 10px;
    height: 10px;
    margin-top: 12px;
    border-radius: 50%;
    background: #f9920b;
    box-shadow: 0 0 2px #ffb347;
}

.addins-txt {
    margin-top: 14px;
    line-height: 18px;
    font-size: 11.500px;
}

.collapse {
    position: absolute;
    right: 7px;
    bottom: 3px;
    width: 10px;
    height: 6px;
}

/* document area */
.docarea {
    flex: 1;
    min-height: 0;
    display: flex;
    background: #e6e6e6;
    overflow: hidden;
}

.leftcol {
    width: 21px;
    flex: none;
}

.tabstop {
    height: 21px;
    background: #dfdfdf;
    padding: 3px 0 0 2px;
}

.tabstop-box {
    display: block;
    position: relative;
    width: 14px;
    height: 14px;
    background: #fff;
}

.tabstop-box i {
    position: absolute;
    left: 4px;
    top: 3px;
    width: 6px;
    height: 7px;
    border-left: 2px solid #666;
    border-bottom: 2px solid #666;
}

.vruler {
    display: flow-root;
    width: 11px;
    height: 900px;
    margin: 25px 0 0 3px;
    background-color: #c6c6c6;
    background-image:
        linear-gradient(#444 1px, transparent 1px),
        linear-gradient(#444 1px, transparent 1px),
        linear-gradient(#fff, #fff);
    background-size: 2px 16.750px, 5px 67px, 100% 763px;
    background-position: center 2px, center 2px, 0 137px;
    background-repeat: repeat-y, repeat-y, no-repeat;
}

.vnums {
    display: flex;
    flex-direction: column;
    margin-top: -65px;
}

.vnums span {
    height: 134px;
    flex: none;
    display: flex;
    align-items: center;
    justify-content: center;
}

.vnums b {
    writing-mode: vertical-rl;
    transform: rotate(180deg);
    font-weight: 400;
    font-size: 8px;
    line-height: 11px;
    width: 11px;
    text-align: center;
    background: #fff;
    color: #333;
}

.docmain {
    margin-left: 385px;
    width: 1108px;
    flex: none;
}

.hruler {
    position: relative;
    height: 10px;
    margin-top: 5px;
    background-color: #c6c6c6;
    background-image:
        linear-gradient(to right, #444 1px, transparent 1px),
        linear-gradient(to right, #444 1px, transparent 1px),
        linear-gradient(#fff, #fff);
    background-size: 16.750px 2px, 67px 6px, 842px 100%;
    background-position: 2px center, 2px center, 132px 0;
    background-repeat: repeat-x, repeat-x, no-repeat;
}

.hnums {
    display: flex;
    margin-left: -65px;
    height: 10px;
}

.hnums span {
    width: 134px;
    flex: none;
    display: flex;
    justify-content: center;
}

.hnums b {
    font-weight: 400;
    font-size: 9px;
    line-height: 10px;
    padding: 0 1px;
    background: #fff;
    color: #333;
}

.hnums b.g,
.vnums b.g {
    background: #c6c6c6;
}

.hnums b.h,
.vnums b.h {
    display: none;
}

.indent-l {
    position: absolute;
    left: 132px;
    top: -3px;
    width: 9px;
    height: 22px;
}

.indent-r {
    position: absolute;
    left: 970px;
    top: 4px;
    width: 9px;
    height: 9px;
}

.page {
    margin: 33px 0 0 3px;
    width: 1105px;
    height: 900px;
    background: #fff;
    border: 1px solid #c6c6c6;
    padding: 341px 0 0 161px;
}

.wordart {
    font-family: "Open Sans", sans-serif;
    font-weight: 700;
    font-size: 84px;
    line-height: 100px;
    color: #fff;
    -webkit-text-stroke: .8px #ee8a4a;
    text-shadow: 1.500px 1.500px 0 #ed7d31, 3.500px 3.500px 0 #ed7d31;
    white-space: nowrap;
    transform: scaleX(.9);
    transform-origin: left;
}

/* status bar */
.status {
    height: 22px;
    flex: none;
    padding-bottom: 2px;
    background: #f3f3f3;
    border-top: 1px solid #c6c6c6;
    border-bottom: 1px solid #c6c6c6;
    display: flex;
    align-items: center;
    font-size: 11px;
    color: #444;
}

.st-page { margin-left: 9px; }
.st-words { margin-left: 20px; }
.st-proof { width: 15px; height: 13px; margin-left: 19px; }
.st-lang { margin-left: 18px; }
.st-acc { width: 17px; height: 15px; margin-left: 17px; }
.st-inv { margin-left: 3px; font-weight: 600; font-size: 10.500px; }

.st-right {
    margin-left: auto;
    height: 20px;
    margin-bottom: -2px;
    display: flex;
    align-items: center;
    padding-right: 5px;
}

.v-read { width: 14px; height: 13px; }

.v-print {
    width: 40px;
    height: 100%;
    margin-left: 13px;
    background: #c6c6c6;
    display: flex;
    align-items: center;
    justify-content: center;
}

.v-print svg { width: 14px; height: 13px; }
.v-web { width: 15px; height: 14px; margin-left: 12px; }

.z-btn {
    width: 7px;
    font-size: 13px;
    line-height: 13px;
    text-align: center;
    margin-left: 20px;
}

.slider {
    position: relative;
    width: 100px;
    height: 1px;
    margin-left: 6px;
    background: #444;
}

.slider + .z-btn {
    margin-left: 5px;
}

.notch {
    position: absolute;
    left: 50px;
    top: -2px;
    width: 1px;
    height: 5px;
    background: #444;
}

.thumb {
    position: absolute;
    left: 53px;
    top: -5px;
    width: 5px;
    height: 11px;
    background: #444;
}

.z-pct { margin-left: 13px; }

/* windows taskbar */
.taskbar {
    height: 44px;
    flex: none;
    background: #eeeeee;
    position: relative;
    display: flex;
    align-items: center;
    font-size: 11px;
    color: #222;
}

.weather {
    position: relative;
    width: 784px;
    height: 100%;
    display: flex;
    align-items: center;
    padding-left: 18px;
    flex: none;
}

.w-ico { width: 23px; height: 23px; }

.w-badge {
    position: absolute;
    left: 28px;
    top: 5px;
    width: 16px;
    height: 16px;
    border-radius: 50%;
    background: #c42b1c;
    color: #fff;
    font-size: 10px;
    line-height: 16px;
    text-align: center;
}

.w-text {
    margin-left: 7px;
    display: flex;
    flex-direction: column;
    line-height: 16px;
}

.w-clear { color: #666; }

.tb-center {
    display: flex;
    align-items: center;
    height: 100%;
}

.start { width: 23px; height: 23px; }

.search {
    width: 98px;
    height: 30px;
    margin: 0 14px 0 15px;
    border-radius: 15px;
    background: #fff;
    display: flex;
    align-items: center;
    justify-content: center;
    gap: 6px;
    font-size: 11.500px;
}

.search svg { width: 14px; height: 14px; }

.app {
    position: relative;
    width: 24px;
    height: 24px;
    margin-right: 20px;
    flex: none;
}

.app svg { display: block; }

.run {
    position: absolute;
    left: 9px;
    bottom: -6px;
    width: 6px;
    height: 3px;
    border-radius: 2px;
    background: #7a7a7a;
}

.chrome {
    display: block;
    width: 24px;
    height: 24px;
    border-radius: 50%;
    background:
        radial-gradient(circle, #3b78e7 0 5px, #fff 5px 6.500px, transparent 6.500px),
        conic-gradient(#e8453c 0 90deg, #fbbc05 90deg 210deg, #34a853 210deg 330deg, #e8453c 330deg);
}

.app .sonic {
    position: absolute;
    right: -5px;
    top: -4px;
    width: 16px;
    height: 16px;
}

.ps {
    display: flex;
    align-items: center;
    justify-content: center;
    width: 22px;
    height: 23px;
    background: #001e36;
    border: 1.500px solid #31a8ff;
    color: #31a8ff;
    font-size: 12px;
    font-weight: 600;
}

.a-vs svg { width: 24px; height: 24px; }
.a-ex svg { width: 24px; height: 23px; }

.wd {
    display: block;
    position: relative;
    width: 24px;
    height: 24px;
    background: linear-gradient(#41a5ee 0 25%, #2b7cd3 25% 50%, #185abd 50% 75%, #103f91 75%);
    border-radius: 2px;
}

.wd-w {
    position: absolute;
    left: -3px;
    top: 5px;
    width: 13px;
    height: 14px;
    background: #185abd;
    color: #fff;
    font-size: 10px;
    font-weight: 700;
    line-height: 14px;
    text-align: center;
}

.tray {
    margin-left: auto;
    display: flex;
    align-items: center;
    padding-right: 18px;
}

.tr-up { width: 11px; height: 6px; }

.tr-lang {
    width: 36px;
    margin-left: 14px;
    display: flex;
    flex-direction: column;
    align-items: center;
    line-height: 16px;
}

.tr-net { width: 17px; height: 16px; margin-left: 13px; }
.tr-vol { width: 16px; height: 14px; margin-left: 7px; }

.tr-clock {
    width: 62px;
    margin-left: 17px;
    display: flex;
    flex-direction: column;
    align-items: flex-end;
    line-height: 16px;
}

.tr-bell { width: 14px; height: 14px; margin-left: 8px; }
```
